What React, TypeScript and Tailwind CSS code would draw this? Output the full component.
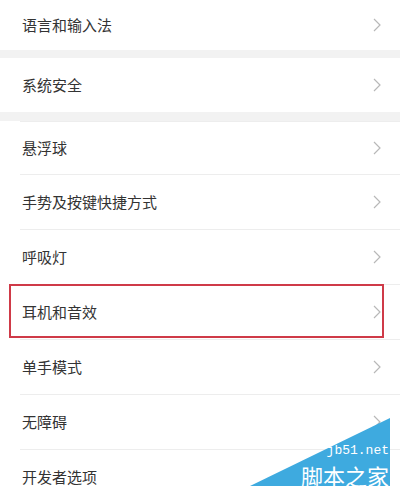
import React from 'react';

const font = '"Noto Sans CJK SC", "Noto Sans", sans-serif';

function Chevron() {
  return (
    <svg width="10" height="14" viewBox="0 0 10 14" className="shrink-0">
      <polyline points="2,1 8,7 2,13" fill="none" stroke="#b8b8b8" strokeWidth="1.2" />
    </svg>
  );
}

function Row({ label, first, height, highlight }: { label: string; first?: boolean; height?: string; highlight?: boolean }) {
  return (
    <div className={`relative ${first ? '' : 'border-t border-[#ededed] ml-[20px]'}`}>
      <div className={`flex items-center justify-between pr-[18px] ${first ? 'pl-[22px]' : 'pl-[2px]'} ${height ?? 'h-[54px]'}`}>
        <span className="text-[15px] text-[#333333]">{label}</span>
        <Chevron />
      </div>
      {highlight && (
        <div className="absolute top-[-1px] left-[-11px] right-[16px] h-[54px] border-2 border-[#cf3a48]" />
      )}
    </div>
  );
}

export default function App() {
  const group = ['悬浮球', '手势及按键快捷方式', '呼吸灯', '耳机和音效', '单手模式', '无障碍', '开发者选项'];
  return (
    <div className="relative w-[400px] h-[497px] overflow-hidden bg-white" style={{ fontFamily: font }}>
      <Row label="语言和输入法" first height="h-[50px]" />
      <div className="h-[8px] bg-[#f2f2f2]" />
      <Row label="系统安全" first height="h-[54px]" />
      <div className="h-[9px] bg-[#f2f2f2]" />
      <div>
        {group.map((g, i) => (
          <Row key={g} label={g} height={i === 0 ? 'h-[52px]' : 'h-[54px]'} highlight={g === '耳机和音效'} />
        ))}
      </div>

      {/* watermark */}
      <div className="absolute left-[250px] top-[418px] w-[140px] h-[68px]">
        <svg width="140" height="68" viewBox="0 0 140 68" className="absolute inset-0">
          <polygon points="0,68 140,0 140,68" fill="#3eaadf" />
        </svg>
        <div className="absolute inset-0 flex flex-col items-end justify-end gap-[7px] pr-[1px] text-white">
          <span className="text-[13px] leading-[13px]" style={{ fontFamily: '"Liberation Mono", monospace' }}>
            jb51.net
          </span>
          <span className="text-[22px] leading-[22px]">脚本之家</span>
        </div>
      </div>
    </div>
  );
}
